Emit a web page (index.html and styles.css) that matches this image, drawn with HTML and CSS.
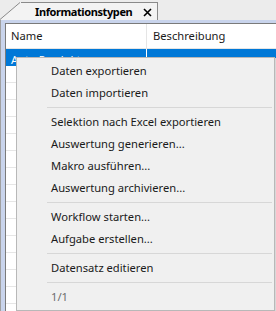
FILE: index.html
```html
<!DOCTYPE html>
<html lang="de">
<head>
  <meta charset="UTF-8">
  <title>Informationstypen</title>
  <link rel="stylesheet" href="styles.css">
</head>
<body>
  <!-- Tab strip -->
  <div class="tabbar">
    <div class="tab">
      <svg class="tab-slant" width="21" height="20" viewBox="0 0 21 20">
        <polygon points="0,20 20,2.5 21,2.5 21,20" fill="#f3f3f3"/>
        <line x1="0" y1="19.5" x2="20" y2="2.5" stroke="#8a8a8a" stroke-width="1"/>
      </svg>
      <div class="tab-body">
        <span class="tab-title">Informationstypen</span>
        <svg class="tab-close" width="9" height="9" viewBox="0 0 9 9">
          <path d="M1 1L8 8M8 1L1 8" stroke="#000" stroke-width="1.6"/>
        </svg>
      </div>
    </div>
  </div>

  <!-- List panel -->
  <div class="frame">
    <div class="panel">
      <div class="list-head">
        <div class="col col-name">Name</div>
        <div class="col col-desc">Beschreibung</div>
      </div>
      <div class="row selected">
        <div class="col col-name">Auto Produkte</div>
        <div class="col col-desc"></div>
      </div>
      <div class="row"></div>
      <div class="row"></div>
      <div class="row"></div>
      <div class="row"></div>
      <div class="row"></div>
      <div class="row"></div>
      <div class="row"></div>
      <div class="row"></div>
      <div class="row"></div>
      <div class="row"></div>
      <div class="row"></div>
      <div class="row"></div>
      <div class="row"></div>
      <div class="row"></div>
    </div>
  </div>

  <!-- Context menu -->
  <div class="menu">
    <div class="item">Daten exportieren</div>
    <div class="item">Daten importieren</div>
    <div class="sep"></div>
    <div class="item">Selektion nach Excel exportieren</div>
    <div class="item">Auswertung generieren...</div>
    <div class="item">Makro ausführen...</div>
    <div class="item">Auswertung archivieren...</div>
    <div class="sep"></div>
    <div class="item">Workflow starten...</div>
    <div class="item">Aufgabe erstellen...</div>
    <div class="sep"></div>
    <div class="item">Datensatz editieren</div>
    <div class="sep"></div>
    <div class="item disabled">1/1</div>
  </div>
</body>
</html>
```

FILE: styles.css
```css
/* Basic Reset */
* {
  margin: 0;
  padding: 0;
  box-sizing: border-box;
}

body {
  width: 276px;
  height: 311px;
  overflow: hidden;
  position: relative;
  background-color: #f0f0f0;
  color: #1a1a1a;
  font-family: "Noto Sans", "Open Sans", sans-serif;
  font-size: 11.2px;
}

/* Tab strip */
.tabbar {
  height: 20px;
  background-color: #ececec;
  display: flex;
}

.tab {
  display: flex;
  height: 20px;
}

.tab-slant {
  display: block;
  flex-shrink: 0;
}

.tab-body {
  width: 137px;
  height: 18px;
  margin-top: 2px;
  background-color: #f3f3f3;
  border-top: 1px solid #8a8a8a;
  border-right: 1px solid #8a8a8a;
  display: flex;
  align-items: center;
  padding: 0 5px 0 14px;
}

.tab-title {
  font-weight: bold;
  font-size: 11px;
  letter-spacing: -0.4px;
  color: #000;
  line-height: 16px;
  white-space: nowrap;
}

.tab-close {
  display: block;
  flex-shrink: 0;
  margin-left: auto;
  margin-top: 1px;
}

/* Frame round the list */
.frame {
  height: 291px;
  background-color: #c9d4ec;
  border-left: 1px solid #a0a0a0;
  padding: 3px 0 0 4px;
}

.panel {
  height: 100%;
  background-color: #ffffff;
  border-top: 1px solid #7a7a7a;
  border-left: 1px solid #7a7a7a;
  overflow: hidden;
}

.list-head {
  display: flex;
  height: 25px;
  border-bottom: 1px solid #e5e5e5;
}

.col {
  line-height: 24px;
  white-space: nowrap;
  overflow: hidden;
}

.col-name {
  width: 140px;
  padding-left: 5px;
}

.col-desc {
  flex: 1;
  padding-left: 6px;
  border-left: 1px solid #e5e5e5;
}

.row {
  display: flex;
  height: 17px;
  border-bottom: 1px solid #e6e6e6;
}

.row.selected {
  background-color: #0078d7;
  color: #ffffff;
  border-bottom: none;
}

.row.selected .col {
  line-height: 17px;
  padding-top: 2px;
}

.row.selected .col-desc {
  border-left: 1px solid #ffffff;
}

/* Context menu (overlays the list) */
.menu {
  position: absolute;
  left: 16px;
  top: 57px;
  width: 259px;
  height: 254px;
  background-color: #f0f0f0;
  border: 1px solid #b8b8b8;
  padding: 2px 2px;
  box-shadow: 1px 1px 0 #d8d8d8;
}

.item {
  height: 22px;
  line-height: 22px;
  padding-left: 32px;
  color: #1a1a1a;
  white-space: nowrap;
}

.item.disabled {
  color: #6d6d6d;
}

.sep {
  height: 7px;
  margin-left: 28px;
  padding-top: 3px;
}

.sep::before {
  content: "";
  display: block;
  height: 1px;
  background-color: #d7d7d7;
}
```
